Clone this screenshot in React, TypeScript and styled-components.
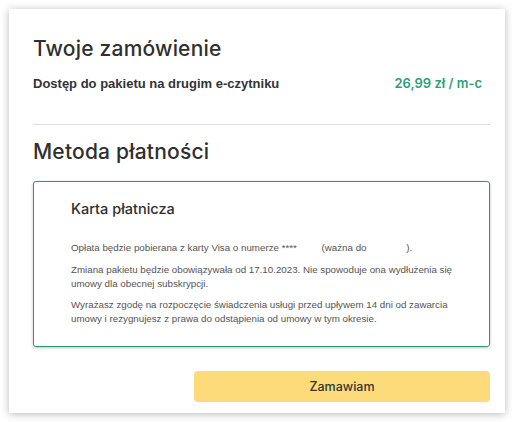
import React from "react";
import styled, { createGlobalStyle } from "styled-components";

const Global = createGlobalStyle`
  html, body { margin: 0; padding: 0; background: #ffffff; }
  body { font-family: "Liberation Sans", Arial, sans-serif; }
`;

const Page = styled.div`
  padding: 9px 10px 9px 9px;
`;

const Card = styled.div`
  width: 496px;
  height: 404px;
  box-sizing: border-box;
  background: #fff;
  box-shadow: 0 1px 8px rgba(0, 0, 0, 0.28);
  padding: 27px 15px 10px 24px;
  display: flex;
  flex-direction: column;
`;

const Heading = styled.h2`
  margin: 0;
  font-family: "Inter", "Open Sans", sans-serif;
  font-weight: 500;
  font-size: 21px;
  line-height: 26px;
  color: #2f2f2f;
  letter-spacing: 0.2px;
`;

const OrderRow = styled.div`
  display: flex;
  justify-content: space-between;
  align-items: center;
  margin-top: 13px;
  padding-right: 8px;
`;

const ProductName = styled.span`
  font-family: "Liberation Sans", Arial, sans-serif;
  font-weight: 700;
  font-size: 13px;
  color: #333;
`;

const Price = styled.span`
  font-family: "Inter", "Open Sans", sans-serif;
  font-weight: 600;
  font-size: 13px;
  color: #2e9e78;
`;

const Divider = styled.hr`
  border: none;
  border-top: 1px solid #dcdcdc;
  margin: 33px 0 14px;
`;

const MethodBox = styled.div`
  margin-top: 16px;
  border: 1px solid #2e9670;
  border-radius: 3px;
  box-shadow: 0 1px 3px rgba(0, 0, 0, 0.25);
  padding: 17px 20px 20px 37px;
  height: 166px;
  box-sizing: border-box;
`;

const MethodTitle = styled.div`
  font-family: "Inter", "Open Sans", sans-serif;
  font-weight: 500;
  font-size: 14.5px;
  color: #2f2f2f;
  line-height: 20px;
  margin-bottom: 22px;
`;

const Note = styled.p`
  margin: 0 0 7px;
  font-family: "Liberation Sans", Arial, sans-serif;
  font-size: 9.75px;
  line-height: 14px;
  color: #555;

  &:first-of-type {
    margin-bottom: 8px;
  }
`;

const Gap = styled.span<{ $w: number }>`
  display: inline-block;
  width: ${(p) => p.$w}px;
`;

const Footer = styled.div`
  display: flex;
  justify-content: flex-end;
  margin-top: 24px;
`;

const OrderButton = styled.button`
  width: 296px;
  height: 31px;
  border: none;
  border-radius: 4px;
  background: #fedb7a;
  font-family: "Inter", "Open Sans", sans-serif;
  font-weight: 500;
  font-size: 12.5px;
  color: #333;
  cursor: pointer;
`;

export default function App() {
  return (
    <>
      <Global />
      <Page>
        <Card>
          <Heading>Twoje zamówienie</Heading>
          <OrderRow>
            <ProductName>Dostęp do pakietu na drugim e-czytniku</ProductName>
            <Price>26,99 zł / m-c</Price>
          </OrderRow>
          <Divider />
          <Heading>Metoda płatności</Heading>
          <MethodBox>
            <MethodTitle>Karta płatnicza</MethodTitle>
            <Note>
              Opłata będzie pobierana z karty Visa o numerze ****
              <Gap $w={22} /> (ważna do
              <Gap $w={37} /> ).
            </Note>
            <Note>
              Zmiana pakietu będzie obowiązywała od 17.10.2023. Nie spowoduje
              ona wydłużenia się umowy dla obecnej subskrypcji.
            </Note>
            <Note>
              Wyrażasz zgodę na rozpoczęcie świadczenia usługi przed upływem 14
              dni od zawarcia umowy i rezygnujesz z prawa do odstąpienia od
              umowy w tym okresie.
            </Note>
          </MethodBox>
          <Footer>
            <OrderButton>Zamawiam</OrderButton>
          </Footer>
        </Card>
      </Page>
    </>
  );
}
